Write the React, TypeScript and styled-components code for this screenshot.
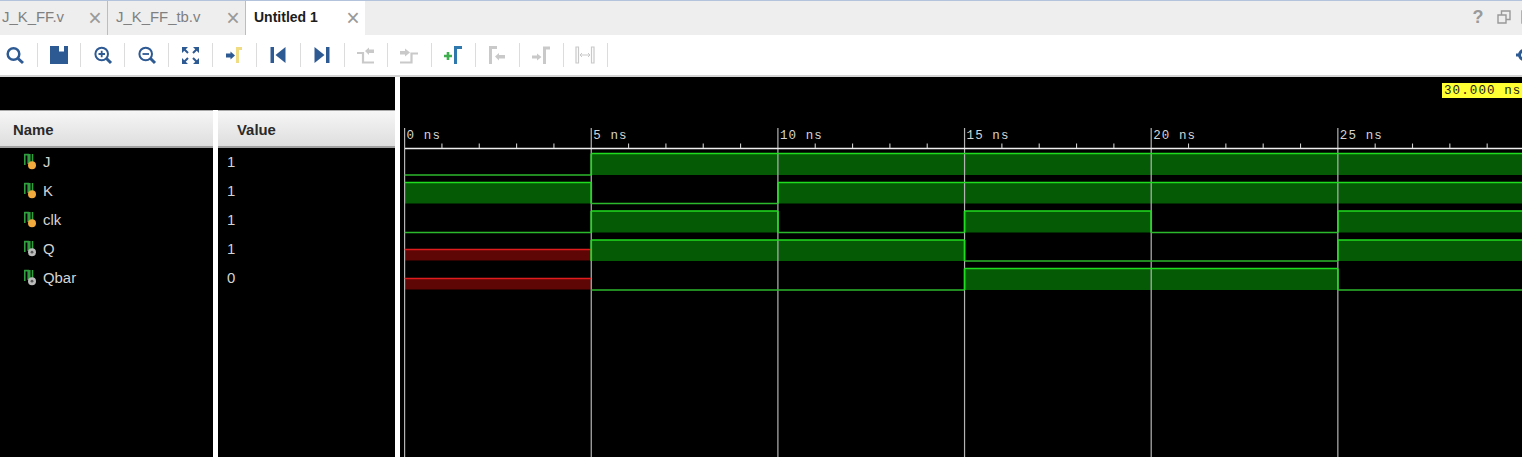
import React from "react";
import styled, { createGlobalStyle } from "styled-components";

const Global = createGlobalStyle`
  html, body { margin: 0; padding: 0; background: #000; overflow: hidden; }
  * { box-sizing: border-box; }
`;

const Page = styled.div`
  width: 1522px; height: 457px; overflow: hidden; display: flex; flex-direction: column;
  font-family: "Liberation Sans", Arial, sans-serif; background: #000;
`;
const TabBar = styled.div`
  height: 35px; flex: none; display: flex; background: #eeeeee; border-top: 1px solid #b4c3dc; overflow: hidden;
`;
const Tab = styled.div<{ $w: number; $active?: boolean; $pad: number }>`
  width: ${p => p.$w}px; flex: none; display: flex; align-items: center; justify-content: space-between;
  padding: 0 5px 2px ${p => p.$pad}px; font-size: ${p => (p.$active ? 14 : 14.9)}px;
  color: ${p => (p.$active ? "#1c1c1c" : "#808080")}; font-weight: ${p => (p.$active ? 700 : 400)};
  background: ${p => (p.$active ? "#ffffff" : "transparent")};
  border-right: ${p => (p.$active ? "none" : "1px solid #bdbdbd")};
`;
const Close = styled.span`
  font-size: 23px; font-weight: 400; color: #999999; line-height: 1; width: 14px; text-align: center; margin-top: 3px;
`;
const WindowControls = styled.div`
  margin-left: auto; display: flex; align-items: center; gap: 10px; margin-right: -12.5px; padding-bottom: 2px;
`;
const Help = styled.span` font-size: 18px; font-weight: 700; color: #9a9a9a; margin-right: 3px; `;
const Toolbar = styled.div`
  height: 42px; flex: none; display: flex; align-items: center; background: #fff; border-bottom: 2px solid #d4d4d4;
`;
const ToolButton = styled.div`
  width: 43.85px; height: 24px; flex: none; padding-left: 10px; border-right: 1px solid #dcdcdc;
  &:first-child { width: 37.6px; padding-left: 3px; }
  svg { display: block; }
`;
const GearClip = styled.div`
  margin-left: auto; width: 6px; height: 16px; overflow: hidden; color: #2e5a93;
`;
const Body = styled.div`
  flex: 1; display: flex; background: #fff; min-height: 0;
`;
const LeftPane = styled.div`
  width: 395px; flex: none; display: flex; flex-direction: column; background: #000;
`;
const TopStrip = styled.div` height: 33px; flex: none; background: #000; `;
const Columns = styled.div`
  flex: 1; display: grid; grid-template-columns: 213px 177px; column-gap: 5px; background: #fff;
`;
const Column = styled.div` background: #000; display: flex; flex-direction: column; `;
const Header = styled.div<{ $pad: number }>`
  height: 38px; flex: none; display: flex; align-items: center; padding-left: ${p => p.$pad}px; padding-top: 3px;
  font-size: 14.9px; font-weight: 700; color: #2a2a2a;
  background: linear-gradient(#f6f6f6, #dedede);
  border-top: 1px solid #a8a8a8; border-bottom: 2px solid #a0a0a0;
`;
const Row = styled.div<{ $pad: number }>`
  height: 28.8px; flex: none; display: flex; align-items: center; padding-left: ${p => p.$pad}px;
  font-size: 14.9px; color: #d4d4d4;
`;
const NameText = styled.span` margin-left: 1px; `;
const WavePane = styled.div`
  margin-left: 5px; flex: 1; position: relative; background: #000; min-width: 0;
  svg { display: block; }
`;
const MarkerLabel = styled.div`
  position: absolute; left: 1042px; top: 6px; width: 80px; height: 15px; background: #ffff33;
  font-family: "Liberation Mono", monospace; font-size: 12.5px; letter-spacing: 1.1px; line-height: 17px;
  color: #222; padding-left: 2px; white-space: nowrap; overflow: hidden;
`;

const BLUE = "#2e5a93";
const GREY = "#c9c9c9";

const I: React.FC<{ children: React.ReactNode }> = ({ children }) => (
  <svg width="24" height="24" viewBox="0 0 24 24" fill="none">{children}</svg>
);

const icons: React.ReactNode[] = [
  <I><circle cx="10.5" cy="11" r="5.8" stroke={BLUE} strokeWidth="2.5" /><path d="M15 15.5L20 20" stroke={BLUE} strokeWidth="3" /></I>,
  <I><path fillRule="evenodd" d="M2 3H20V21H2ZM11 3H16V8.5H11Z" fill={BLUE} /></I>,
  <I><circle cx="10.7" cy="11" r="6.3" stroke={BLUE} strokeWidth="2" /><path d="M7.5 11H14M10.7 7.8V14.2" stroke={BLUE} strokeWidth="1.8" /><path d="M15.5 15.5L20 20" stroke={BLUE} strokeWidth="3" /></I>,
  <I><circle cx="10.7" cy="11" r="6.3" stroke={BLUE} strokeWidth="2" /><path d="M7.5 11H14" stroke={BLUE} strokeWidth="1.8" /><path d="M15.5 15.5L20 20" stroke={BLUE} strokeWidth="3" /></I>,
  <I><path d="M3 4H9L3 10ZM20 4H14L20 10ZM3 21H9L3 15ZM20 21H14L20 15Z" fill={BLUE} /><path d="M5 6L9 10M18 6L14 10M5 19L9 15M18 19L14 15" stroke={BLUE} strokeWidth="2" /></I>,
  <I><path d="M3 10.5H7.5V8.5L12 12.5L7.5 16.5V14.5H3Z" fill={BLUE} /><path d="M14.5 20V5.5H19" stroke="#f0dc82" strokeWidth="3" /></I>,
  <I><path d="M3.5 4H7V20H3.5Z" fill={BLUE} /><path d="M8.5 12L18.5 4V20Z" fill={BLUE} /></I>,
  <I><path d="M3.5 4L13.5 12L3.5 20Z" fill={BLUE} /><path d="M15 4H18.5V20H15Z" fill={BLUE} /></I>,
  <I><path d="M2 10H8V19.5H19" stroke={GREY} strokeWidth="2.2" /><path d="M10 8L14 4.5V6.5H19V10H14V12Z" fill={GREY} /></I>,
  <I><path d="M20 10.5H13.5V19.5H2" stroke={GREY} strokeWidth="2.2" /><path d="M2 8H7V5.5L12 9.5L7 13.5V11.5H2Z" fill={GREY} /></I>,
  <I><path d="M2 13H10M6 9V17" stroke="#3fae4f" strokeWidth="2.6" /><path d="M13.5 21V4.5H20" stroke="#2f78ad" strokeWidth="3" /></I>,
  <I><path d="M4.5 21V4.5H11" stroke={GREY} strokeWidth="3" /><path d="M9 13.5L13 10V12H19V15.5H13V17.5Z" fill={GREY} /></I>,
  <I><path d="M2 12.5H7V10.5L11.5 14L7 17.5V15.5H2Z" fill={GREY} /><path d="M14.5 21V5H20" stroke={GREY} strokeWidth="3" /></I>,
  <I><path d="M2 4H4.5V20H2ZM17.5 4H20V20H17.5Z" stroke={GREY} strokeWidth="1.2" /><path d="M6 12H16M6 12L8 10M6 12L8 14M16 12L14 10M16 12L14 14" stroke={GREY} strokeWidth="1" /></I>,
];

const PortIcon: React.FC<{ output?: boolean }> = ({ output }) => (
  <svg width="19" height="18" viewBox="0 0 19 18" fill="none">
    <path d="M1.8 1V12M1.2 1.6H5.2V11M9.5 1V10M6.8 1V9" stroke="#2e9e3e" strokeWidth="1.6" />
    <circle cx="9" cy="12.2" r="4" fill={output ? "#bcbcbc" : "#f2a93e"} />
    {output && <circle cx="9" cy="12.2" r="1.4" fill="#5a5a5a" />}
  </svg>
);

const signals = [
  { name: "J", value: "1", output: false },
  { name: "K", value: "1", output: false },
  { name: "clk", value: "1", output: false },
  { name: "Q", value: "1", output: true },
  { name: "Qbar", value: "0", output: true },
];

const X0 = 404.6, NS = 37.33;
const xAt = (t: number) => X0 + t * NS;
const END = 30;

type Seg = [number, number, "0" | "1" | "x"];
const waves: { high: number; low: number; segs: Seg[] }[] = [
  { high: 153.5, low: 175, segs: [[0, 5, "0"], [5, END, "1"]] },
  { high: 182.5, low: 203.5, segs: [[0, 5, "1"], [5, 10, "0"], [10, END, "1"]] },
  { high: 211, low: 232.5, segs: [[0, 5, "0"], [5, 10, "1"], [10, 15, "0"], [15, 20, "1"], [20, 25, "0"], [25, END, "1"]] },
  { high: 240, low: 261, segs: [[0, 5, "x"], [5, 15, "1"], [15, 25, "0"], [25, END, "1"]] },
  { high: 268.5, low: 290, segs: [[0, 5, "x"], [5, 15, "0"], [15, 25, "1"], [25, END, "0"]] },
];

const Waves: React.FC = () => {
  const majors = [0, 5, 10, 15, 20, 25];
  const minors = Array.from({ length: 31 }, (_, i) => i).filter(i => i % 5 !== 0);
  return (
    <svg width="1122" height="380" viewBox="400 77 1122 380">
      {waves.map((w, i) => w.segs.map(([a, b, v], j) =>
        v === "1" ? <rect key={`${i}-${j}`} x={xAt(a)} y={w.high} width={xAt(b) - xAt(a)} height={w.low - w.high} fill="#055a05" />
        : v === "x" ? <rect key={`${i}-${j}`} x={xAt(a)} y={w.low - 11.5} width={xAt(b) - xAt(a)} height={11} fill="#5e0505" /> : null
      ))}
      {majors.map(t => (
        <path key={t} d={`M${xAt(t)} 128V457`} stroke="#b4b4b4" strokeWidth="1.2" />
      ))}
      <path d="M405 148.5H1522" stroke="#eeeeee" strokeWidth="1.3" />
      {minors.map(t => (
        <path key={t} d={`M${xAt(t)} 143.5V148`} stroke="#cccccc" strokeWidth="1.1" />
      ))}
      {majors.map(t => (
        <text key={t} x={xAt(t) + 2} y="139" fontFamily="'Liberation Mono', monospace" fontSize="12.5" letterSpacing="1.1" fill="#d4d4d4">{t} ns</text>
      ))}
      {waves.map((w, i) => w.segs.map(([a, b, v], j) => {
        const next = w.segs[j + 1];
        const xa = xAt(a), xb = xAt(b);
        return (
          <g key={`${i}-${j}`}>
            {v === "x"
              ? <path d={`M${xa} ${w.low - 11.5}H${xb}`} stroke="#e01c1c" strokeWidth="1.5" />
              : <path d={`M${xa} ${v === "1" ? w.high : w.low}H${xb}`} stroke={v === "1" ? "#20dc20" : "#2cb82c"} strokeWidth={v === "1" ? 1.7 : 1.4} />}
            {next && !(v === "x" && next[2] === "0") && <path d={`M${xb} ${w.high}V${w.low}`} stroke="#20dc20" strokeWidth="1.7" />}
          </g>
        );
      }))}
    </svg>
  );
};

export default function App() {
  return (
    <Page>
      <Global />
      <TabBar>
        <Tab $w={108} $pad={2}>J_K_FF.v<Close>×</Close></Tab>
        <Tab $w={138} $pad={8}>J_K_FF_tb.v<Close>×</Close></Tab>
        <Tab $w={119} $pad={8} $active>Untitled 1<Close>×</Close></Tab>
        <WindowControls>
          <Help>?</Help>
          <svg width="14" height="14" viewBox="0 0 14 14" fill="none" stroke="#999" strokeWidth="1.4">
            <path d="M1 5H9V13H1ZM4.5 5V1H13V9.5H9" />
          </svg>
          <svg width="14" height="14" viewBox="0 0 14 14" fill="none" stroke="#999" strokeWidth="1.4">
            <path d="M1 1H13V13H1Z" />
          </svg>
        </WindowControls>
      </TabBar>
      <Toolbar>
        {icons.map((icon, i) => <ToolButton key={i}>{icon}</ToolButton>)}
        <GearClip>
          <svg width="16" height="16" viewBox="0 0 16 16">
            <circle cx="8" cy="8" r="4.5" fill="none" stroke="currentColor" strokeWidth="3" />
            <path d="M6.5 0H9.5V3H6.5ZM6.5 13H9.5V16H6.5ZM0 6.5H3V9.5H0ZM13 6.5H16V9.5H13Z" fill="currentColor" />
          </svg>
        </GearClip>
      </Toolbar>
      <Body>
        <LeftPane>
          <TopStrip />
          <Columns>
            <Column>
              <Header $pad={13}>Name</Header>
              {signals.map(s => (
                <Row key={s.name} $pad={23}>
                  <PortIcon output={s.output} />
                  <NameText>{s.name}</NameText>
                </Row>
              ))}
            </Column>
            <Column>
              <Header $pad={19}>Value</Header>
              {signals.map(s => <Row key={s.name} $pad={9}>{s.value}</Row>)}
            </Column>
          </Columns>
        </LeftPane>
        <WavePane>
          <Waves />
          <MarkerLabel>30.000 ns</MarkerLabel>
        </WavePane>
      </Body>
    </Page>
  );
}
